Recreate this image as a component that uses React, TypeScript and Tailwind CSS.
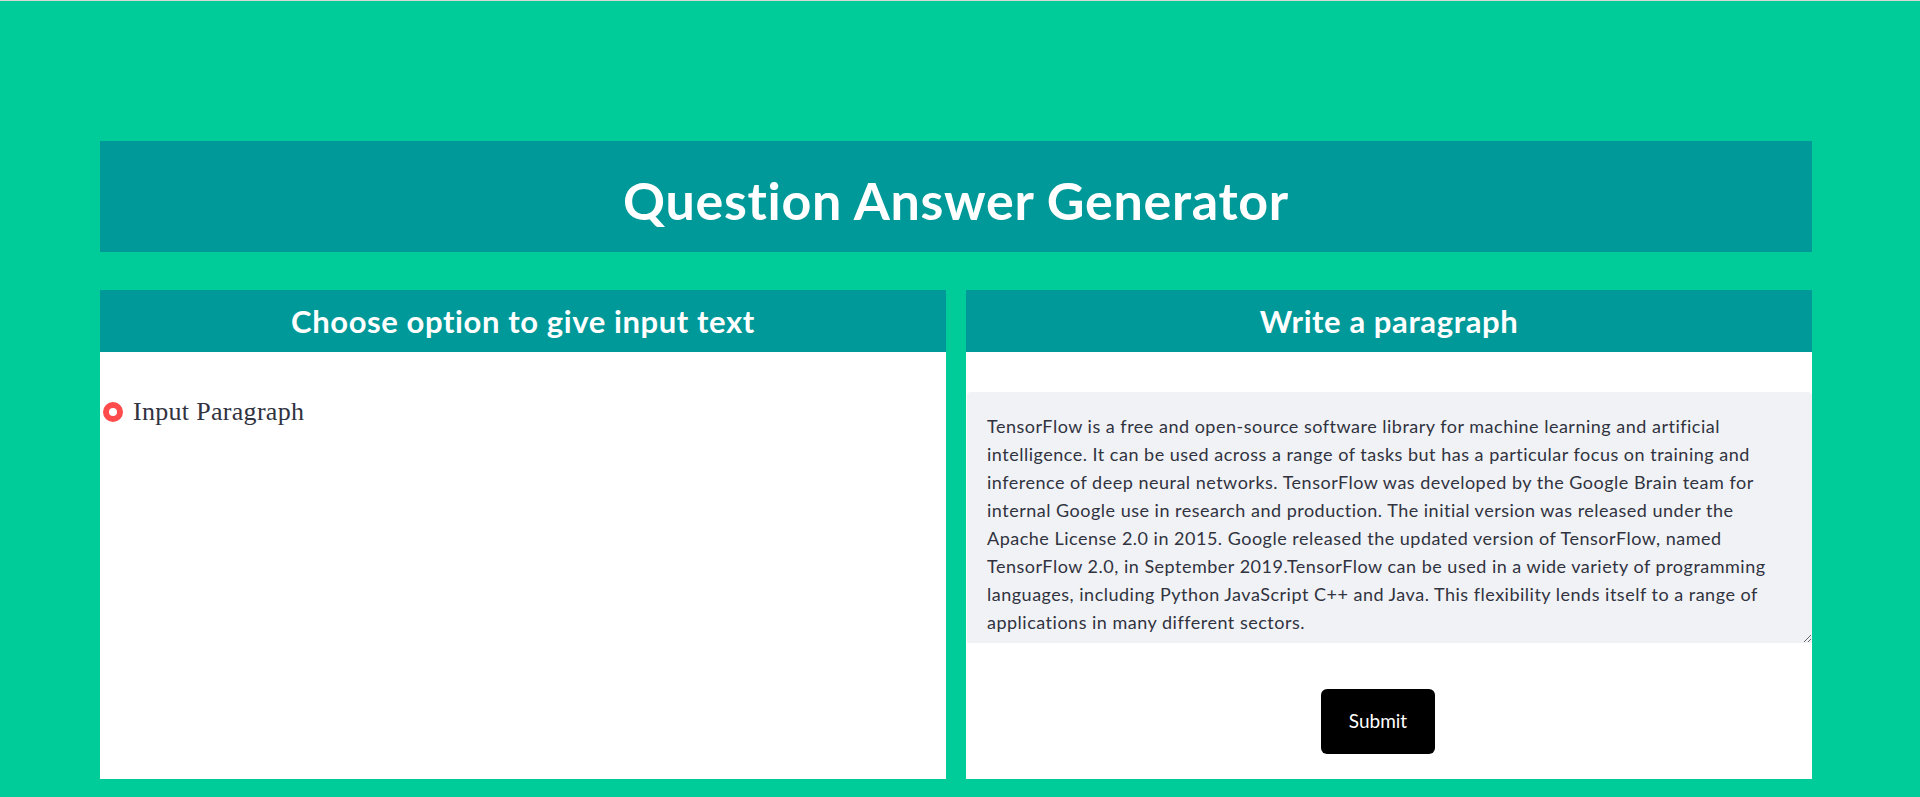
import React from "react";

const PARAGRAPH =
	"TensorFlow is a free and open-source software library for machine learning and artificial intelligence. It can be used across a range of tasks but has a particular focus on training and inference of deep neural networks. TensorFlow was developed by the Google Brain team for internal Google use in research and production. The initial version was released under the Apache License 2.0 in 2015. Google released the updated version of TensorFlow, named TensorFlow 2.0, in September 2019.TensorFlow can be used in a wide variety of programming languages, including Python JavaScript C++ and Java. This flexibility lends itself to a range of applications in many different sectors.";

function App() {
	return (
		<div className="min-h-screen w-full bg-[#00cc99] border-t border-[#d6d6d6] font-['Lato',sans-serif]">
			<div className="pl-[100px] pr-[108px] pt-[140px] pb-[18px]">
				{/* title */}
				<div className="h-[111px] bg-[#009999] flex items-center justify-center">
					<h1 className="text-white font-bold text-[52px] leading-none tracking-[0.7px] mt-[6px]">
						Question Answer Generator
					</h1>
				</div>

				{/* panels */}
				<div className="mt-[38px] grid grid-cols-2 gap-[20px] h-[489px]">
					{/* left */}
					<div className="bg-white flex flex-col">
						<div className="h-[62px] bg-[#009999] flex items-center justify-center">
							<h2 className="text-white font-bold text-[31px] tracking-[0.6px]">
								Choose option to give input text
							</h2>
						</div>
						<label className="mt-[40px] flex items-center gap-[10px] pl-[3px]">
							<span className="w-[20px] h-[20px] rounded-full bg-[#ff4b4b] flex items-center justify-center">
								<span className="w-[8px] h-[8px] rounded-full bg-white"></span>
							</span>
							<span className="text-[#31333f] text-[26px] tracking-[0.3px] font-['Liberation_Serif',serif]">
								Input Paragraph
							</span>
						</label>
					</div>

					{/* right */}
					<div className="bg-white flex flex-col">
						<div className="h-[62px] bg-[#009999] flex items-center justify-center">
							<h2 className="text-white font-bold text-[31px] tracking-[0.6px]">
								Write a paragraph
							</h2>
						</div>
						<div className="mt-[40px] pl-[1px]">
							<textarea
								className="block w-full h-[251px] bg-[#f0f2f6] rounded-t-[4px] pt-[20px] pl-[20px] pr-[30px] text-[18px] tracking-[0.5px] leading-[28px] text-[#31333f] resize-y outline-none font-['Lato',sans-serif]"
								defaultValue={PARAGRAPH}
							/>
						</div>
						<div className="flex justify-center mt-[46px] pr-[22px]">
							<button className="w-[114px] h-[65px] bg-black text-white text-[19px] rounded-[6px]">
								Submit
							</button>
						</div>
					</div>
				</div>
			</div>
		</div>
	);
}

export default App;
